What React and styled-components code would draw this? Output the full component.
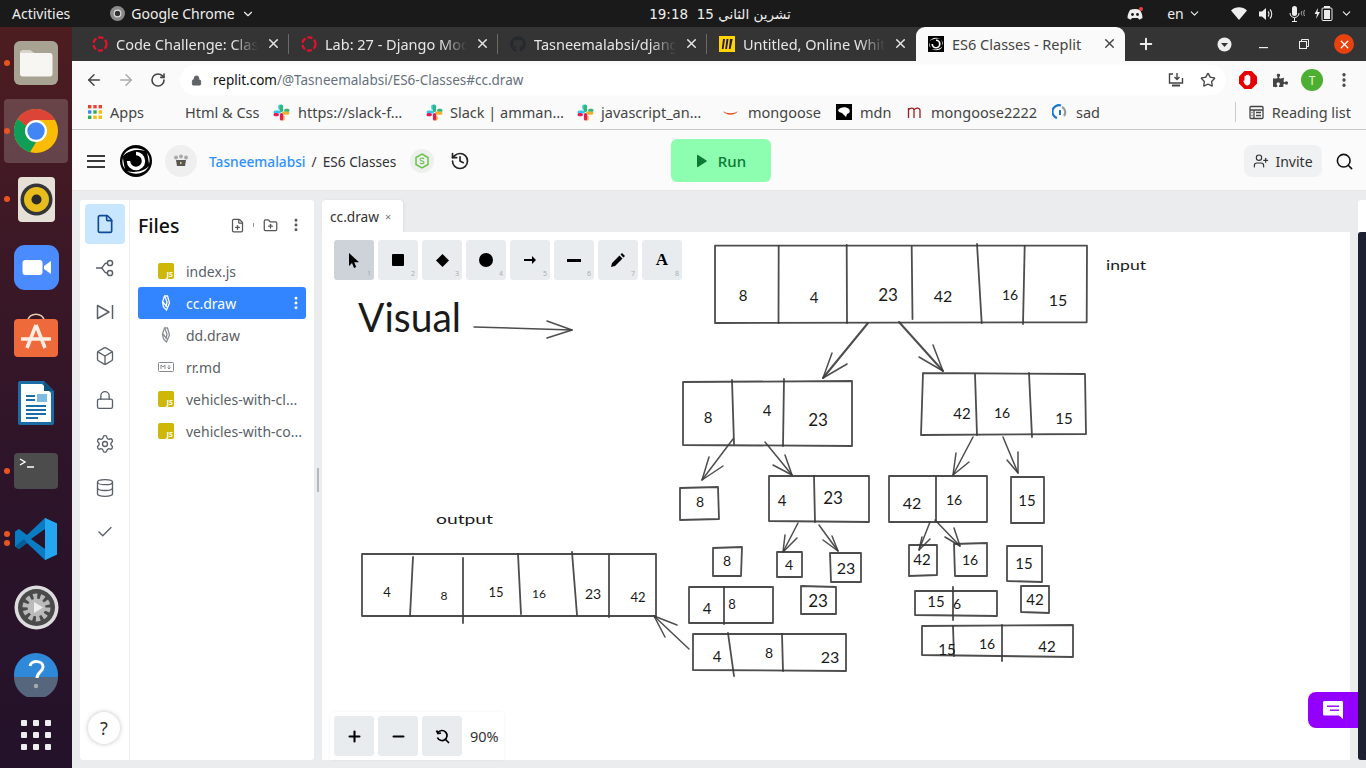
import React from 'react';
import styled, { createGlobalStyle } from 'styled-components';
import {
  ArrowLeft, ArrowRight, RotateCw, Star, MoreVertical, Plus, X, Search, History, UserPlus,
  File, FilePlus, FolderPlus, Box, Lock, Settings, Database, Check, ChevronDown, Minus,
} from 'lucide-react';
import { FaGithub, FaPuzzlePiece } from 'react-icons/fa';

const Global = createGlobalStyle`
  html, body { margin: 0; padding: 0; background: #ebecee; overflow: hidden; }
  * { box-sizing: border-box; }
`;

const chromeFont = `"Noto Sans", "DejaVu Sans", sans-serif`;
const replFont = `"Noto Sans", "Open Sans", sans-serif`;

const Page = styled.div`
  width: 1366px; height: 768px; display: flex; flex-direction: column; overflow: hidden;
  font-family: ${chromeFont};
`;

/* ---------- system bar ---------- */
const TopBar = styled.header`
  height: 27px; flex: none; background: #1a1a1a; color: #eee; display: flex; align-items: center;
  position: relative; padding-left: 12px; font-size: 14px;
`;
const AppMenu = styled.div`
  display: flex; align-items: center; gap: 6px; margin-left: 40px;
`;
const Clock = styled.div`
  position: absolute; left: 646px; width: 148px; text-align: center;
  font-family: "DejaVu Sans", "Noto Sans", sans-serif; white-space: nowrap; font-size: 13.5px;
`;
const Tray = styled.div`
  margin-left: auto; display: flex; align-items: center; padding-right: 8px; height: 100%;
`;
const TrayItem = styled.span`
  display: inline-flex; align-items: center; gap: 4px; width: ${p => p.$w}px; justify-content: center;
  margin-right: ${p => p.$mr || 0}px;
`;

/* ---------- dock ---------- */
const Main = styled.div`display: flex; flex: 1; min-height: 0;`;
const Dock = styled.nav`
  width: 72px; flex: none; padding-top: 2px; display: flex; flex-direction: column; align-items: center;
  background: linear-gradient(180deg, #4d1d20 0%, #3c1826 30%, #2d1429 60%, #23122a 100%);
`;
const DockItem = styled.div`
  width: 64px; height: ${p => p.$h || 68}px; flex: none; display: flex; align-items: center; justify-content: center;
  position: relative;
  &::before {
    content: ''; position: absolute; inset: 2px 0; border-radius: 4px;
    background: ${p => (p.$active ? 'rgba(255,255,255,.18)' : 'transparent')};
  }
  svg { position: relative; }
`;
const RunDot = styled.i`
  position: absolute; left: 0; top: ${p => p.$top}px; width: 6px; height: 6px; border-radius: 50%; background: #e9541f; z-index: 1;
`;

/* ---------- browser chrome ---------- */
const Browser = styled.div`flex: 1; min-width: 0; display: flex; flex-direction: column;`;
const TabStrip = styled.div`
  height: 34px; flex: none; background: #343434; display: flex; align-items: stretch; padding-left: 8px;
`;
const Tab = styled.div`
  width: 209px; flex: none; display: flex; align-items: center; padding: 0 8px 1px 12px; gap: 8px; font-size: 14.5px;
  color: ${p => (p.$active ? '#444' : '#e6e6e6')}; position: relative;
  background: ${p => (p.$active ? '#fafafa' : 'transparent')};
  border-radius: ${p => (p.$active ? '9px 9px 0 0' : '0')};
  &::after {
    content: ''; position: absolute; right: 0; top: 7px; bottom: 7px; width: 1px;
    background: ${p => (p.$sep ? '#6a6a6a' : 'transparent')};
  }
`;
const TabTitle = styled.span`
  flex: 1; min-width: 0; overflow: hidden; white-space: nowrap;
  -webkit-mask-image: ${p => (p.$active ? 'none' : 'linear-gradient(90deg, #000 82%, transparent 100%)')};
`;
const WindowControls = styled.div`
  flex: 1; display: flex; align-items: center; color: #eee; padding-left: 12px; position: relative;
`;
const WinBtn = styled.span`
  position: absolute; left: ${p => p.$x}px; display: inline-flex;
`;
const CloseWin = styled.span`
  position: absolute; left: ${p => p.$x}px; width: 20px; height: 20px; border-radius: 50%; background: #e8420f;
  display: inline-flex; align-items: center; justify-content: center; color: #fff;
`;
const ToolBar = styled.div`
  height: 34px; flex: none; background: #fafafa; display: flex; align-items: center; padding: 4px 0 0 6px; color: #444;
`;
const NavBtn = styled.span`
  width: 32px; display: inline-flex; justify-content: center; color: ${p => (p.$off ? '#aaa' : '#444')};
`;
const Omni = styled.div`
  width: 1046px; height: 30px; background: #fff; border-radius: 15px; margin-left: 6px; display: flex; align-items: center;
  padding-left: 11px; font-size: 13.5px; color: #66707c;
`;
const Host = styled.span`color: #111;`;
const OmniEnd = styled.span`
  margin-left: auto; display: flex; align-items: center; gap: 16px; padding-right: 10px; color: #444;
`;
const ExtRow = styled.div`display: flex; align-items: center; margin-left: 6px;`;
const ExtBtn = styled.span`width: 32px; display: inline-flex; justify-content: center; color: #444;`;
const Profile = styled.span`
  width: 22px; height: 22px; border-radius: 50%; background: #4caf2f; color: #e8f5e0; font-size: 12px;
  display: inline-flex; align-items: center; justify-content: center;
`;
const Bookmarks = styled.div`
  height: 35px; flex: none; background: #fafafa; display: flex; align-items: center; padding: 0 15px; font-size: 14.5px; color: #444;
  border-bottom: 1px solid #c8c8c8; white-space: nowrap;
`;
const Bookmark = styled.span`
  display: inline-flex; align-items: center; gap: ${p => p.$gap ?? 7}px; width: ${p => p.$w}px; flex: none; height: 100%;
`;
const BookmarkEnd = styled.span`
  margin-left: auto; display: inline-flex; align-items: center; gap: 8px; padding-left: 13px; border-left: 1px solid #ccc; height: 20px;
`;

/* ---------- replit header ---------- */
const Header = styled.div`
  height: 61px; flex: none; background: #fbfbfb; border-bottom: 1px solid #e6e6e6; display: flex; align-items: center;
  padding: 2px 12px 0 15px; font-family: ${replFont}; position: relative; color: #222;
`;
const Burger = styled.span`width: 18px; height: 13px; display: flex; flex-direction: column; justify-content: space-between; margin-right: 15px;
  i { height: 2px; background: #3a3a3a; display: block; }
`;
const Spacer = styled.span`width: ${p => p.$w}px; flex: none;`;
const Crumbs = styled.div`display: flex; align-items: center; gap: 6px; font-size: 13.7px; margin-left: 12px; color: #333;`;
const Owner = styled.span`color: #2e90ff; font-weight: 500;`;
const RunBtn = styled.button`
  position: absolute; left: 599px; top: 9px; width: 100px; height: 43px; border: 0; border-radius: 6px; background: #8dfdb0;
  color: #0c7a33; font: 500 15px ${replFont}; display: flex; align-items: center; justify-content: center; gap: 10px;
`;
const HeadEnd = styled.div`margin-left: auto; display: flex; align-items: center; gap: 13px;`;
const Invite = styled.button`
  width: 78px; height: 32px; border: 0; border-radius: 8px; background: #f0f1f2; color: #333; font: 400 14px ${replFont};
  display: flex; align-items: center; justify-content: center; gap: 6px; padding: 0;
`;

/* ---------- workspace ---------- */
const Workspace = styled.div`
  flex: 1; min-height: 0; background: #ebecee; padding: 9px 0 8px 8px; display: flex; gap: 8px; position: relative; font-family: ${replFont};
`;
const Sidebar = styled.aside`
  width: 234px; flex: none; background: #fff; border-radius: 3px; display: flex;
`;
const Rail = styled.div`
  width: 50px; flex: none; border-right: 1px solid #eceef0; display: flex; flex-direction: column; align-items: center;
  padding-top: 4px; gap: 4px; position: relative; color: #5a6068;
`;
const RailBtn = styled.span`
  width: 40px; height: 40px; border-radius: 4px; display: flex; align-items: center; justify-content: center;
  background: ${p => (p.$active ? '#c8e6ff' : 'transparent')}; color: ${p => (p.$active ? '#0f4c94' : '#5a6068')};
`;
const HelpBtn = styled.span`
  position: absolute; left: 8px; bottom: 16px; width: 32px; height: 32px; border-radius: 50%; background: #fff;
  box-shadow: 0 0 5px rgba(0,0,0,.25); display: flex; align-items: center; justify-content: center; font-size: 18px; color: #333;
`;
const FilePane = styled.div`flex: 1; min-width: 0; padding: 0 8px;`;
const FileHead = styled.div`
  height: 55px; display: flex; align-items: center; padding: 0 0 5px 0; color: #555; margin-right: -6px;
`;
const FileTitle = styled.h2`
  margin: 0 auto 0 0; font-size: 19.5px; font-weight: 500; color: #111;
`;
const HeadIcon = styled.span`width: ${p => p.$w || 20}px; display: inline-flex; justify-content: center;`;
const HeadSep = styled.i`width: 1px; height: 4px; background: #999; margin: 0 6px;`;
const FileRow = styled.div`
  height: 32px; display: flex; align-items: center; padding-left: 20px; gap: 12px; border-radius: 3px; font-size: 14px; position: relative;
  background: ${p => (p.$active ? '#3385ff' : 'transparent')}; color: ${p => (p.$active ? '#fff' : '#5a5f66')};
  white-space: nowrap;
`;
const RowMore = styled.span`position: absolute; right: 2px; top: 8px; display: inline-flex;`;
const JsBadge = styled.span`
  width: 16px; height: 16px; background: #cdb80a; border-radius: 2px; color: #fff; font-size: 7.5px; font-weight: 700; flex: none;
  display: flex; align-items: flex-end; justify-content: flex-end; padding: 0 1px 0 0; line-height: 10px;
`;
const IconSlot = styled.span`width: 16px; display: inline-flex; justify-content: center; flex: none;`;
const Splitter = styled.i`
  position: absolute; left: 245px; top: 277px; width: 2px; height: 24px; background: #b5b8bc;
`;
const Editor = styled.section`
  width: 1028px; flex: none; display: flex; flex-direction: column;
`;
const EditorTabs = styled.div`height: 32px; flex: none; display: flex;`;
const EditorTab = styled.div`
  width: 81px; background: #fff; border-radius: 4px 4px 0 0; display: flex; align-items: center; padding-left: 8px; gap: 6px; font-size: 13.7px; color: #333;
  box-shadow: 1px 0 3px rgba(0,0,0,.06);
`;
const TabX = styled.span`font-size: 11px; color: #777;`;
const Canvas = styled.div`flex: 1; background: #fff; position: relative; min-height: 0;`;
const Sketch = styled.svg`display: block; width: 100%; height: 100%;`;
const Tools = styled.div`position: absolute; left: 12px; top: 8px; display: flex; gap: 4px;`;
const ToolBtn = styled.span`
  width: 40px; height: 40px; border-radius: 3px; background: ${p => (p.$active ? '#ced2d9' : '#e9ecef')};
  display: flex; align-items: center; justify-content: center; position: relative; color: #000;
`;
const ToolNum = styled.span`
  position: absolute; right: 3px; bottom: 2px; font-size: 7px; color: #a9adb3; line-height: 8px;
`;
const ToolLetter = styled.span`font: 700 17px "Liberation Serif", serif; color: #000;`;
const ZoomBar = styled.div`
  position: absolute; left: 8px; bottom: 0; height: 48px; width: 174px; background: #fff; padding: 4px; display: flex; gap: 4px; align-items: center;
  border-radius: 3px 3px 0 0; box-shadow: 0 0 3px rgba(0,0,0,.06);
`;
const ZoomText = styled.span`font-size: 14.5px; color: #333; margin-left: 4px;`;
const RightPane = styled.aside`
  flex: 1; min-width: 0; display: flex; flex-direction: column;
`;
const RightTabs = styled.div`height: 32px; flex: none; background: #fff; border-radius: 3px 0 0 0;`;
const RightBody = styled.div`flex: 1; background: #1c2030; border-radius: 3px 0 0 3px;`;
const ChatBtn = styled.span`
  position: absolute; right: 8px; bottom: 40px; width: 50px; height: 36px; background: #9400ff; border-radius: 8px 0 0 8px;
  display: flex; align-items: center; justify-content: center;
`;

/* ---------- sketch pieces ---------- */
const Ink = styled.polyline`
  fill: none; stroke: #3a3a3a; stroke-width: ${p => p.$w || 1.8}; stroke-linecap: round; stroke-linejoin: round; opacity: .9;
`;
const Scribble = styled.text`
  font-family: "Lato", "Open Sans", sans-serif; font-weight: 400; font-size: ${p => p.$s || 13}px; fill: #1a1a1a;
  text-anchor: ${p => p.$anchor || 'middle'}; dominant-baseline: central;
`;

const boxes = [
  { p: '715,245.7 1087,245.7 1086.7,322.3 715,323 715,245.7', d: ['778.7,246 778.5,323', '846.7,245 847,323', '911.7,246.7 912.5,319', '977,244 981.7,323', '1024.7,246 1023,324'] },
  { p: '683,382 852,381 852,446 683,445 683,382', d: ['732,380 734,444', '784,379 783,446'] },
  { p: '923,373 1085,374 1086,434 921,435 923,373', d: ['975,374 977,435', '1029,373 1032,437'] },
  { p: '680,488 718,487 719,519 680,520 680,488', d: [] },
  { p: '769,476 869,476 869,522 769,521 769,476', d: ['814,476 815,522'] },
  { p: '889,476 987,476 987,522 889,522 889,476', d: ['936,476 936,522'] },
  { p: '1011,477 1044,477 1044,523 1011,523 1011,477', d: [] },
  { p: '713,548 742,547 741,576 713,576 713,548', d: [] },
  { p: '777,552 802,552 802,577 777,577 777,552', d: [] },
  { p: '830,553 861,553 861,582 831,582 830,553', d: [] },
  { p: '909,545 937,545 937,575 909,576 909,545', d: [] },
  { p: '954,544 987,543 987,576 955,576 954,544', d: [] },
  { p: '1007,546 1042,546 1042,582 1007,581 1007,546', d: [] },
  { p: '689,587 773,587 773,623 689,623 689,587', d: ['724,587 724,624'] },
  { p: '801,586 836,587 836,614 801,614 801,586', d: [] },
  { p: '915,591 997,591 997,616 915,615 915,591', d: ['953,587 953,620'] },
  { p: '1021,586 1049,586 1049,613 1021,612 1021,586', d: [] },
  { p: '693,634 846,634 846,671 693,670 693,634', d: ['728,633 734,676', '782,634 783,671'] },
  { p: '922,626 1073,625 1073,657 922,655 922,626', d: ['953,626 954,656', '1002,625 1002,661'] },
  { p: '362,554 656,554 656,616 362,616 362,554', d: ['413,557 410,616', '463,558 463,623', '518,554 521,614', '572,552 577,615', '609,555 609,617'] },
];

const arrows = [
  ['474,327 572,330', '547,321 572,330 547,338'],
  ['868,323 823,378', '832,353 823,378 847,364'],
  ['899,322 943,371', '933,345 943,371 919,357'],
  ['733,439 702,480', '709,457 702,480 723,466'],
  ['765,442 792,475', '785,455 792,475 773,465'],
  ['973,437 953,475', '956,453 953,475 969,462'],
  ['1003,437 1018,473', '1018,452 1018,473 1007,460'],
  ['798,523 783,552', '785,535 783,552 797,538'],
  ['819,525 838,551', '832,536 838,551 823,540'],
  ['930,522 919,550', '922,537 919,550 930,539'],
  ['935,520 960,546', '954,528 960,546 945,537'],
  ['689,649 654,616', '677,625 654,616 665,637'],
];

const digits = [
  [743, 295, '8', 15], [814, 297, '4', 15], [888, 294, '23', 17], [943, 295, '42', 16], [1010, 294, '16', 14], [1058, 299, '15', 16],
  [708, 417, '8', 15], [767, 410, '4', 15], [818, 419, '23', 17], [962, 413, '42', 15], [1002, 412, '16', 14], [1064, 418, '15', 15],
  [700, 501, '8', 14], [782, 500, '4', 15], [833, 497, '23', 17], [912, 502, '42', 16], [954, 499, '16', 14], [1027, 500, '15', 15],
  [727, 560, '8', 14], [789, 564, '4', 14], [846, 567, '23', 16], [922, 559, '42', 15], [970, 559, '16', 14], [1024, 563, '15', 15],
  [707, 608, '4', 15], [732, 604, '8', 13], [818, 600, '23', 17], [936, 601, '15', 15], [957, 603, '6', 14], [1035, 599, '42', 15],
  [717, 656, '4', 15], [769, 652, '8', 14], [830, 656, '23', 16], [947, 649, '15', 15], [987, 643, '16', 14], [1047, 646, '42', 15],
  [387, 592, '4', 13], [444, 595, '8', 12], [496, 592, '15', 13], [539, 593, '16', 12], [593, 593, '23', 14], [638, 597, '42', 13],
];

const SketchArt = () => (
  <Sketch viewBox="322 232 1028 528">
    {boxes.map((b, i) => (
      <g key={i}>
        <Ink points={b.p} />
        {b.d.map((d, j) => <Ink key={j} points={d} />)}
      </g>
    ))}
    {arrows.map((a, i) => (
      <g key={i}>
        <Ink points={a[0]} $w={i === 1 || i === 2 ? 2 : 1.5} />
        <Ink points={a[1]} $w={1.5} />
      </g>
    ))}
    {digits.map(([x, y, t, s], i) => <Scribble key={i} x={x} y={y} $s={s}>{t}</Scribble>)}
    <Scribble x={358} y={317} $s={40} $anchor="start" textLength={103} lengthAdjust="spacingAndGlyphs">Visual</Scribble>
    <Scribble x={1106} y={264} $s={14} $anchor="start" textLength={40} lengthAdjust="spacingAndGlyphs">input</Scribble>
    <Scribble x={436} y={518} $s={14} $anchor="start" textLength={57} lengthAdjust="spacingAndGlyphs">output</Scribble>
  </Sketch>
);

/* ---------- drawn icons ---------- */
const RedRing = () => (
  <svg width="16" height="16" viewBox="0 0 16 16"><circle cx="8" cy="8" r="6.6" fill="none" stroke="#e8102a" strokeWidth="2.2" strokeDasharray="5.2 2.1" /></svg>
);
const MiroIcon = () => (
  <svg width="16" height="16" viewBox="0 0 16 16"><rect width="16" height="16" fill="#ffd500" />
    <path d="M4 3h2L4.5 13H2.8zM7.5 3h2L8 13H6.2zM11 3h2.6l-2 10H9.8z" fill="#241a5e" /></svg>
);
const ReplSwirl = ({ size = 16, tile }) => (
  <svg width={size} height={size} viewBox="0 0 32 32">
    {tile ? <rect width="32" height="32" fill="#000" /> : <circle cx="16" cy="16" r="16" fill="#000" />}
    <path d="M16 8.500a7.500 7.500 0 1 1-7.500 7.500" fill="none" stroke="#fff" strokeWidth="3.400" />
    <path d="M3 11C7 3 17 1 25 6 18 4 9 5 3 11z" fill="#fff" />
    <path d="M29 21C25 29 15 31 7 26 14 28 23 27 29 21z" fill="#fff" />
    <path d="M27 8c3 4 3 8 2 11-.5-4-1-7-2-11zM5 24c-3-4-3-8-2-11 .5 4 1 7 2 11z" fill="#fff" />
  </svg>
);
const SlackIcon = () => (
  <svg width="17" height="17" viewBox="0 0 16 16">
    <rect x="0.5" y="6" width="7" height="3" rx="1.5" fill="#36c5f0" /><rect x="5" y="0.5" width="3" height="5" rx="1.5" fill="#36c5f0" />
    <rect x="6.5" y="0.5" width="3" height="7" rx="1.5" fill="#2eb67d" /><rect x="10.5" y="4.5" width="5" height="3" rx="1.5" fill="#2eb67d" />
    <rect x="8.5" y="7" width="7" height="3" rx="1.5" fill="#ecb22e" /><rect x="8" y="10.5" width="3" height="5" rx="1.5" fill="#ecb22e" />
    <rect x="6.5" y="8.5" width="3" height="7" rx="1.5" fill="#e01e5a" /><rect x="0.5" y="8.5" width="5" height="3" rx="1.5" fill="#e01e5a" />
  </svg>
);
const AppsGrid = () => {
  const c = ['#ea4335', '#ea4335', '#ea4335', '#4285f4', '#34a853', '#fbbc05', '#34a853', '#fbbc05', '#fbbc05'];
  return (
    <svg width="16" height="16" viewBox="0 0 16 16">
      {c.map((f, i) => <rect key={i} x={1 + (i % 3) * 5.3} y={1 + Math.floor(i / 3) * 5.3} width="3.4" height="3.4" fill={f} />)}
    </svg>
  );
};
const MongooseIcon = () => (
  <svg width="16" height="16" viewBox="0 0 16 16"><path d="M0 7c4 3 11 3 15 0-3 5-12 5-15 0z" fill="#e0561f" /></svg>
);
const MdnIcon = () => (
  <svg width="16" height="16" viewBox="0 0 16 16"><rect width="16" height="16" fill="#000" />
    <path d="M2 6c2-3 8-4 11-1 1 1 1 3 0 4l-2 1-1 3-2-2-2-2-3-1z" fill="#fff" /></svg>
);
const MIcon = () => (
  <svg width="16" height="16" viewBox="0 0 16 16"><path d="M1.5 14V4M1.5 6c1-2 5-3 5.5 0v8M7 6c1-2 5-3 6 0v8" fill="none" stroke="#a11c1c" strokeWidth="1.3" /></svg>
);
const SadIcon = () => (
  <svg width="16" height="16" viewBox="0 0 16 16">
    <path d="M5 14A6.500 6.500 0 0 1 9 1.500" fill="none" stroke="#1976d2" strokeWidth="2.200" />
    <path d="M10 3a6 6 0 0 1 2 9" fill="none" stroke="#999" strokeWidth="2.200" />
    <path d="M8 11V6" stroke="#1976d2" strokeWidth="2" />
  </svg>
);
const ReadingIcon = () => (
  <svg width="15" height="15" viewBox="0 0 15 15" fill="none" stroke="#444" strokeWidth="1.3">
    <rect x="1" y="1.5" width="13" height="12" rx="1" /><path d="M1 5h13M5 5v8.5M7 7.5h5M7 10.5h5M2.5 7.5h1M2.5 10.5h1" />
  </svg>
);
const AdBlock = () => (
  <svg width="18" height="18" viewBox="0 0 18 18">
    <path d="M5.5 0h7L18 5.5v7L12.5 18h-7L0 12.5v-7z" fill="#e60000" />
    <path d="M5.5 9V5.5c0-1 1.4-1 1.4 0V4.4c0-1 1.5-1 1.5 0v-.2c0-1 1.5-1 1.5 0v1c0-1 1.4-1 1.4 0V11c0 2-1.3 3.5-3 3.5S5.5 13 4.5 10.500c-.3-1 .6-1.400 1-.6z" fill="#fff" />
  </svg>
);
const InstallIcon = () => (
  <svg width="16" height="16" viewBox="0 0 16 16" fill="none" stroke="#444" strokeWidth="1.4">
    <path d="M5 2H1.5v9h13V6" /><path d="M9 1v6M6.5 5 9 7.5 11.5 5" /><path d="M4 13.5h8" strokeWidth="2" />
  </svg>
);
const PipeIcon = () => (
  <svg width="20" height="20" viewBox="0 0 20 20" fill="none" stroke="#5a6068" strokeWidth="1.5">
    <path d="M1 10h5M6 10c3 0 2-5 6-5M6 10c3 0 2 5 6 5" /><circle cx="15" cy="5" r="2.6" /><circle cx="15" cy="15" r="2.6" />
  </svg>
);
const DebugIcon = () => (
  <svg width="20" height="20" viewBox="0 0 20 20" fill="none" stroke="#5a6068" strokeWidth="1.5" strokeLinejoin="round">
    <path d="M2.5 3.5v13L14 10zM17.5 3v14" />
  </svg>
);
const DrawFile = ({ color = '#8a8e94' }) => (
  <svg width="10" height="16" viewBox="0 0 10 16" fill="none" stroke={color} strokeWidth="1.3">
    <path d="M3.5 1h3l2 7-3 7-3-3-1-5z" /><path d="M4 2l2 5-1 5M2 7l4 5" />
  </svg>
);
const MdIcon = () => (
  <svg width="16" height="10" viewBox="0 0 16 10" fill="none" stroke="#85898f" strokeWidth="1">
    <rect x=".5" y=".5" width="15" height="9" rx="1" /><path d="M3 7V3l2 2 2-2v4M11 3v4M9.5 5.5 11 7l1.5-1.5" />
  </svg>
);
const OrgAvatar = () => (
  <svg width="32" height="32" viewBox="0 0 32 32"><circle cx="16" cy="16" r="16" fill="#efefef" />
    <path d="M11 15h10l-1 6h-8z" fill="#555" /><circle cx="11" cy="12.500" r="2" fill="#aaa" /><circle cx="16" cy="11.500" r="2" fill="#aaa" /><circle cx="21" cy="12.500" r="2" fill="#aaa" />
    <path d="M15 16.500l2.500 1.500-2.500 1.500z" fill="#e9c46a" />
  </svg>
);
const NodeBadge = () => (
  <svg width="24" height="24" viewBox="0 0 24 24"><circle cx="12" cy="12" r="12" fill="#edf0ee" />
    <path d="M12 5l6 3.500v7L12 19l-6-3.500v-7z" fill="none" stroke="#6cc24a" strokeWidth="1.500" />
    <path d="M14 9.800c-1-1-4-.8-4 .7 0 2 4 1 4 3 0 1.400-3 1.400-4 .3" fill="none" stroke="#6cc24a" strokeWidth="1.100" />
  </svg>
);
const PlayIcon = () => (
  <svg width="12" height="14" viewBox="0 0 12 14"><path d="M1 1.500v11c0 .6.600.9 1 .6l8.500-5.500c.4-.3.4-.9 0-1.200L2 .9c-.4-.3-1 0-1 .600z" fill="#0c7a33" /></svg>
);
const Pointer = () => <svg width="12" height="15" viewBox="0 0 12 15"><path d="M1 0v13l3-3 2 5 2.200-1-2-4.800H11z" fill="#000" /></svg>;
const SquareTool = () => <svg width="12" height="12"><rect width="12" height="12" rx="1" fill="#000" /></svg>;
const DiamondTool = () => <svg width="13" height="13" viewBox="0 0 13 13"><path d="M6.500 0 13 6.500 6.500 13 0 6.500z" fill="#000" /></svg>;
const CircleTool = () => <svg width="14" height="14"><circle cx="7" cy="7" r="7" fill="#000" /></svg>;
const ArrowTool = () => <svg width="12" height="8" viewBox="0 0 12 8"><path d="M0 3h8V0l4 4-4 4V5H0z" fill="#000" /></svg>;
const LineTool = () => <svg width="14" height="3"><rect width="14" height="3" fill="#000" /></svg>;
const PencilTool = () => <svg width="14" height="14" viewBox="0 0 14 14"><path d="M0 14l1-4 7.500-7.500 3 3L4 13zM9.500 1.500 11 0l3 3-1.500 1.500z" fill="#000" /></svg>;
const ChatGlyph = () => (
  <svg width="20" height="18" viewBox="0 0 20 18"><path d="M1.500 0h17c.8 0 1.500.7 1.500 1.500V18l-4-3.500H1.500C.7 14.500 0 13.800 0 13V1.500C0 .7.700 0 1.500 0z" fill="#fff" />
    <rect x="4" y="4.500" width="12" height="1.400" fill="#9400ff" /><rect x="7" y="8.500" width="9" height="1.400" fill="#9400ff" /></svg>
);
const ResetZoom = () => (
  <svg width="15" height="15" viewBox="0 0 15 15" fill="none" stroke="#000" strokeWidth="1.700">
    <path d="M3 3.500a5 5 0 1 1-.6 5" /><path d="M1.500 1.500 3 4.500l3-.5M10.500 10.500 14 14" />
  </svg>
);
const DiscordIcon = () => (
  <svg width="16" height="14" viewBox="0 0 16 14"><path d="M3 3c3-1.500 7-1.500 10 0 1.500 2.500 2.500 5 2.500 8-1 .9-2.500 1.500-3.500 1.500l-1-1.500H5l-1 1.500C3 12.500 1.500 11.900.5 11c0-3 1-5.500 2.500-8z" fill="#eee" />
    <circle cx="5.500" cy="7.500" r="1.400" fill="#1a1a1a" /><circle cx="10.500" cy="7.500" r="1.400" fill="#1a1a1a" /><circle cx="14" cy="2" r="2" fill="#e8432f" /></svg>
);
const WifiIcon = () => <svg width="16" height="13" viewBox="0 0 16 13"><path d="M0 3.500C4.500-.9 11.500-.9 16 3.500L8 13z" fill="#eee" /></svg>;
const VolumeIcon = () => (
  <svg width="16" height="14" viewBox="0 0 16 14"><path d="M0 4.500h3L7 1v12L3 9.500H0z" fill="#eee" /><path d="M9 4.500c1.300 1.300 1.300 3.700 0 5M11 2.500c2.300 2.400 2.300 6.600 0 9" fill="none" stroke="#eee" strokeWidth="1.100" /></svg>
);
const MicIcon = () => (
  <svg width="17" height="16" viewBox="0 0 17 16"><rect x="3" y="0" width="5" height="10" rx="2.500" fill="#eee" />
    <path d="M1 7c0 6 9 6 9 0M5.500 12v3M3 15.500h5" fill="none" stroke="#eee" /><path d="M13 5c-1 1.500-1 3 0 4.500M15.500 4c-1 2-1 4 0 6" fill="none" stroke="#aaa" /></svg>
);
const BatteryIcon = () => (
  <svg width="19" height="15" viewBox="0 0 19 15"><path d="M4 2 .5 8H3l-1 5 4-7H3.500z" fill="#eee" /><rect x="8" y="2" width="10" height="12.500" rx="1" fill="none" stroke="#eee" /><rect x="10" y="0" width="6" height="2" fill="#eee" /><rect x="10" y="4" width="6" height="9" fill="#eee" /></svg>
);
const GrayChrome = () => (
  <svg width="15" height="15" viewBox="0 0 15 15"><circle cx="7.500" cy="7.500" r="7.500" fill="#8a8a8a" /><circle cx="7.500" cy="7.500" r="3.300" fill="#333" stroke="#ddd" strokeWidth="1.200" /></svg>
);
const ChromeBall = ({ size = 44 }) => (
  <svg width={size} height={size} viewBox="0 0 44 44">
    <circle cx="22" cy="22" r="22" fill="#fbbc05" />
    <path d="M3.500 10A22 22 0 0 1 41 11H22l-9.500 6.500z" fill="#db4437" />
    <path d="M3.500 10l9 7 9.500 16-6 10.200A22 22 0 0 1 3.500 10z" fill="#0f9d58" />
    <circle cx="22" cy="22" r="11" fill="#fff" /><circle cx="22" cy="22" r="8.700" fill="#4285f4" />
  </svg>
);
const DockFiles = () => (
  <svg width="44" height="44" viewBox="0 0 44 44"><rect width="44" height="44" rx="6" fill="#a8a293" />
    <path d="M6 12c0-1.500 1-2.500 2.500-2.500h8L20 12h16c1.500 0 2.500 1 2.500 2.500V33c0 1.500-1 2.500-2.500 2.500H8.500C7 35.500 6 34.500 6 33z" fill="#f7f6f3" />
    <path d="M6 12c0-1.500 1-2.500 2.500-2.500h8L20 12z" fill="#d9d5cb" /></svg>
);
const DockSpeaker = () => (
  <svg width="37" height="45" viewBox="0 0 37 45"><rect width="37" height="45" rx="4" fill="#e5e1d6" />
    <circle cx="18.500" cy="22.500" r="16" fill="#33353b" /><circle cx="18.500" cy="22.500" r="12.500" fill="#e8bd1c" /><circle cx="18.500" cy="22.500" r="5" fill="#2a2a2a" /></svg>
);
const DockZoom = () => (
  <svg width="45" height="45" viewBox="0 0 45 45"><rect width="45" height="45" rx="11" fill="#4a8cff" />
    <rect x="8.500" y="15" width="20" height="15" rx="3" fill="#fff" /><path d="M30 21l7-5v13l-7-5z" fill="#fff" /></svg>
);
const DockStore = () => (
  <svg width="44" height="44" viewBox="0 0 44 44">
    <path d="M14 8c0-9 16-9 16 0" fill="none" stroke="#e6c9a8" strokeWidth="1.500" />
    <rect y="6" width="44" height="38" rx="4" fill="#ee6a3a" />
    <path d="M22 12 13 35M22 12l9 23M7 26h30" fill="none" stroke="#fdeee5" strokeWidth="3.500" /></svg>
);
const DockWriter = () => (
  <svg width="36" height="44" viewBox="0 0 36 44"><path d="M2 0h24l10 10v32c0 1-1 2-2 2H2c-1 0-2-1-2-2V2c0-1 1-2 2-2z" fill="#1b6ea5" />
    <path d="M3 3h21l9 9v29H3z" fill="#fff" /><path d="M26 0l10 10H26z" fill="#0f527f" />
    <path d="M8 15h9M8 19h9M8 25h20M8 29h20M8 33h20M8 37h12" stroke="#1b6ea5" strokeWidth="1.800" /><rect x="19" y="13" width="10" height="8" fill="#7dbbe0" /></svg>
);
const DockTerminal = () => (
  <svg width="44" height="36" viewBox="0 0 44 36"><rect width="44" height="36" rx="4" fill="#4c4c4c" />
    <path d="M6 6l5 3-5 3M13 14h7" fill="none" stroke="#fff" strokeWidth="1.400" /></svg>
);
const DockCode = () => (
  <svg width="42" height="42" viewBox="0 0 42 42">
    <path d="M30 0l12 5.500v31L30 42 12 25 4 31l-4-2.500V13.500L4 11l8 6z" fill="#0a7cc4" />
    <path d="M30 0l12 5.500v31L30 42z" fill="#24a7f0" /><path d="M30 11 16 21l14 10z" fill="#2a1228" />
    <path d="M0 28.500 4 31l8-6-3-4z" fill="#075d96" /></svg>
);
const DockGear = () => (
  <svg width="45" height="45" viewBox="0 0 45 45"><circle cx="22.500" cy="22.500" r="22" fill="#ddd" /><circle cx="22.500" cy="22.500" r="18.500" fill="#4a4a4a" />
    <circle cx="22.500" cy="22.500" r="11" fill="none" stroke="#b9b9b9" strokeWidth="6" strokeDasharray="4 2.900" /><circle cx="22.500" cy="22.500" r="9" fill="#bbb" /><path d="M20 17l9 5.500-9 5.500z" fill="#eee" /></svg>
);
const DockHelp = () => (
  <svg width="44" height="44" viewBox="0 0 44 44">
    <circle cx="22" cy="22" r="22" fill="#2e8ad8" /><path d="M0 24h44a22 22 0 0 1-44 0z" fill="#56667c" />
    <path d="M16 13c1-6 13-6 13 1 0 5-6 5-6 11" fill="none" stroke="#fff" strokeWidth="3" /><circle cx="22" cy="33" r="2.200" fill="#aaa" /></svg>
);
const DockGrid = () => (
  <svg width="30" height="30" viewBox="0 0 30 30">
    {[0, 1, 2, 3, 4, 5, 6, 7, 8].map(i => <rect key={i} x={(i % 3) * 12} y={Math.floor(i / 3) * 12} width="6" height="6" rx="1" fill="#eee" />)}
  </svg>
);

const Vdots = ({ size = 18, color = 'currentColor' }) => <MoreVertical size={size} color={color} strokeWidth={2.4} />;

const tabs = [
  { t: 'Code Challenge: Class', i: <RedRing /> },
  { t: 'Lab: 27 - Django Mode', i: <RedRing /> },
  { t: 'Tasneemalabsi/django', i: <FaGithub size={16} color="#26292e" /> },
  { t: 'Untitled, Online Whit', i: <MiroIcon /> },
];

const files = [
  { n: 'index.js', i: <JsBadge>JS</JsBadge> },
  { n: 'cc.draw', i: <DrawFile color="#fff" />, active: true },
  { n: 'dd.draw', i: <DrawFile /> },
  { n: 'rr.md', i: <MdIcon /> },
  { n: 'vehicles-with-cl...', i: <JsBadge>JS</JsBadge> },
  { n: 'vehicles-with-co...', i: <JsBadge>JS</JsBadge> },
];

const tools = [<Pointer />, <SquareTool />, <DiamondTool />, <CircleTool />, <ArrowTool />, <LineTool />, <PencilTool />, <ToolLetter>A</ToolLetter>];

export default function App() {
  return (
    <Page>
      <Global />
      <TopBar>
        <span>Activities</span>
        <AppMenu><GrayChrome /><span>Google Chrome</span><ChevronDown size={14} /></AppMenu>
        <Clock>19:18&nbsp; 15 تشرين الثاني</Clock>
        <Tray>
          <TrayItem $w={30} $mr={14}><DiscordIcon /></TrayItem>
          <TrayItem $w={40} $mr={22}>en <ChevronDown size={13} /></TrayItem>
          <TrayItem $w={26}><WifiIcon /></TrayItem>
          <TrayItem $w={30}><VolumeIcon /></TrayItem>
          <TrayItem $w={30}><MicIcon /></TrayItem>
          <TrayItem $w={22}><BatteryIcon /></TrayItem>
          <TrayItem $w={24}><ChevronDown size={13} /></TrayItem>
        </Tray>
      </TopBar>
      <Main>
        <Dock>
          <DockItem><RunDot $top={31} /><DockFiles /></DockItem>
          <DockItem $active><RunDot $top={31} /><ChromeBall /></DockItem>
          <DockItem><RunDot $top={31} /><DockSpeaker /></DockItem>
          <DockItem><DockZoom /></DockItem>
          <DockItem><DockStore /></DockItem>
          <DockItem><DockWriter /></DockItem>
          <DockItem><RunDot $top={31} /><DockTerminal /></DockItem>
          <DockItem><RunDot $top={26} /><RunDot $top={35} /><DockCode /></DockItem>
          <DockItem><DockGear /></DockItem>
          <DockItem><DockHelp /></DockItem>
          <DockItem $h={52}><DockGrid /></DockItem>
        </Dock>
        <Browser>
          <TabStrip>
            {tabs.map((t, i) => (
              <Tab key={i} $sep={i < 3}>
                {t.i}
                <TabTitle>{t.t}</TabTitle>
                <X size={15} strokeWidth={2.4} />
              </Tab>
            ))}
            <Tab $active>
              <ReplSwirl tile />
              <TabTitle $active>ES6 Classes - Replit</TabTitle>
              <X size={15} color="#444" strokeWidth={2.2} />
            </Tab>
            <WindowControls>
              <Plus size={18} strokeWidth={2.6} />
              <WinBtn $x={92}>
                <svg width="15" height="15" viewBox="0 0 15 15"><circle cx="7.500" cy="7.500" r="7" fill="#eee" /><path d="M4 6h7l-3.500 4z" fill="#343434" /></svg>
              </WinBtn>
              <WinBtn $x={134}>
                <svg width="9" height="9" viewBox="0 0 9 9"><rect y="7" width="9" height="1.200" fill="#eee" /></svg>
              </WinBtn>
              <WinBtn $x={174}>
                <svg width="10" height="10" viewBox="0 0 10 10" fill="none" stroke="#eee"><rect x=".5" y="2.500" width="7" height="7" /><path d="M2.500 2.500V.5h7v7h-2" /></svg>
              </WinBtn>
              <CloseWin $x={209}><X size={13} strokeWidth={2.4} /></CloseWin>
            </WindowControls>
          </TabStrip>
          <ToolBar>
            <NavBtn><ArrowLeft size={18} /></NavBtn>
            <NavBtn $off><ArrowRight size={18} /></NavBtn>
            <NavBtn><RotateCw size={16} strokeWidth={2.4} /></NavBtn>
            <Omni>
              <Lock size={11} fill="#5f6368" color="#5f6368" style={{ marginRight: 11 }} />
              <span><Host>replit.com</Host>/@Tasneemalabsi/ES6-Classes#cc.draw</span>
              <OmniEnd><InstallIcon /><Star size={16} /></OmniEnd>
            </Omni>
            <ExtRow>
              <ExtBtn><AdBlock /></ExtBtn>
              <ExtBtn><FaPuzzlePiece size={15} color="#444" /></ExtBtn>
              <ExtBtn><Profile>T</Profile></ExtBtn>
              <ExtBtn><Vdots /></ExtBtn>
            </ExtRow>
          </ToolBar>
          <Bookmarks>
            <Bookmark $w={98}><AppsGrid /><span>Apps</span></Bookmark>
            <Bookmark $w={88}>Html &amp; Css</Bookmark>
            <Bookmark $w={153} $gap={8}><SlackIcon /><span>https://slack-f…</span></Bookmark>
            <Bookmark $w={151}><SlackIcon /><span>Slack | amman…</span></Bookmark>
            <Bookmark $w={146}><SlackIcon /><span>javascript_an…</span></Bookmark>
            <Bookmark $w={113} $gap={9}><MongooseIcon /><span>mongoose</span></Bookmark>
            <Bookmark $w={71} $gap={8}><MdnIcon /><span>mdn</span></Bookmark>
            <Bookmark $w={145} $gap={8}><MIcon /><span>mongoose2222</span></Bookmark>
            <Bookmark $w={60} $gap={8}><SadIcon /><span>sad</span></Bookmark>
            <BookmarkEnd><ReadingIcon /><span>Reading list</span></BookmarkEnd>
          </Bookmarks>
          <Header>
            <Burger><i /><i /><i /></Burger>
            <ReplSwirl size={32} />
            <Spacer $w={13} />
            <OrgAvatar />
            <Crumbs>
              <Owner>Tasneemalabsi</Owner><span>/</span><span>ES6 Classes</span>
              <Spacer $w={2} /><NodeBadge />
              <Spacer $w={4} /><History size={20} color="#222" />
            </Crumbs>
            <RunBtn><PlayIcon />Run</RunBtn>
            <HeadEnd>
              <Invite><UserPlus size={16} strokeWidth={1.7} />Invite</Invite>
              <Search size={19} color="#111" strokeWidth={2} />
            </HeadEnd>
          </Header>
          <Workspace>
            <Sidebar>
              <Rail>
                <RailBtn $active><File size={20} /></RailBtn>
                <RailBtn><PipeIcon /></RailBtn>
                <RailBtn><DebugIcon /></RailBtn>
                <RailBtn><Box size={20} strokeWidth={1.6} /></RailBtn>
                <RailBtn><Lock size={20} strokeWidth={1.6} /></RailBtn>
                <RailBtn><Settings size={20} strokeWidth={1.6} /></RailBtn>
                <RailBtn><Database size={20} strokeWidth={1.6} /></RailBtn>
                <RailBtn><Check size={18} strokeWidth={1.8} /></RailBtn>
                <HelpBtn>?</HelpBtn>
              </Rail>
              <FilePane>
                <FileHead>
                  <FileTitle>Files</FileTitle>
                  <HeadIcon><FilePlus size={15} /></HeadIcon>
                  <HeadSep />
                  <HeadIcon><FolderPlus size={15} /></HeadIcon>
                  <HeadIcon $w={32}><Vdots size={16} /></HeadIcon>
                </FileHead>
                {files.map(f => (
                  <FileRow key={f.n} $active={f.active}>
                    <IconSlot>{f.i}</IconSlot>
                    <span>{f.n}</span>
                    {f.active && <RowMore><Vdots size={16} /></RowMore>}
                  </FileRow>
                ))}
              </FilePane>
            </Sidebar>
            <Splitter />
            <Editor>
              <EditorTabs>
                <EditorTab>cc.draw <TabX>×</TabX></EditorTab>
              </EditorTabs>
              <Canvas>
                <SketchArt />
                <Tools>
                  {tools.map((t, i) => (
                    <ToolBtn key={i} $active={i === 0}>{t}<ToolNum>{i + 1}</ToolNum></ToolBtn>
                  ))}
                </Tools>
                <ZoomBar>
                  <ToolBtn><Plus size={17} strokeWidth={3} /></ToolBtn>
                  <ToolBtn><Minus size={17} strokeWidth={3} /></ToolBtn>
                  <ToolBtn><ResetZoom /></ToolBtn>
                  <ZoomText>90%</ZoomText>
                </ZoomBar>
              </Canvas>
            </Editor>
            <RightPane>
              <RightTabs />
              <RightBody />
            </RightPane>
            <ChatBtn><ChatGlyph /></ChatBtn>
          </Workspace>
        </Browser>
      </Main>
    </Page>
  );
}
